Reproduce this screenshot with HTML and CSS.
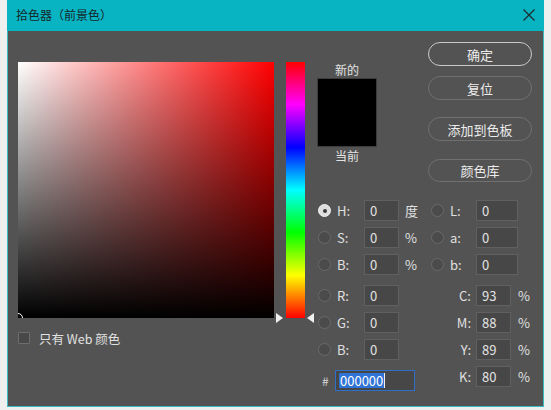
FILE: index.html
```html
<!DOCTYPE html>
<html lang="zh-CN">
<head>
<meta charset="utf-8">
<title>拾色器（前景色）</title>
<link rel="stylesheet" href="styles.css">
</head>
<body>
<div class="window">
  <div class="titlebar">
    <span class="title">拾色器（前景色）</span>
    <svg class="close" width="12" height="12" viewBox="0 0 12 12"><path d="M0.5 0.5L11.5 11.5M11.5 0.5L0.5 11.5" stroke="#1c2a2c" stroke-width="1.2" fill="none"/></svg>
  </div>
  <div class="content">
    <div class="picker">
      <div class="field"><span class="marker"></span></div>
      <div class="webonly"><span class="checkbox"></span><span>只有 Web 颜色</span></div>
    </div>
    <div class="hue-wrap">
      <div class="hue"></div>
      <span class="arrow arrow-l"></span>
      <span class="arrow arrow-r"></span>
    </div>
    <div class="panel">
      <div class="top">
        <div class="preview">
          <div class="plabel">新的</div>
          <div class="swatch"></div>
          <div class="plabel">当前</div>
        </div>
        <div class="buttons">
          <div class="btn btn-primary">确定</div>
          <div class="btn btn-reset">复位</div>
          <div class="btn btn-add">添加到色板</div>
          <div class="btn btn-lib">颜色库</div>
        </div>
      </div>
      <div class="fields">
        <div class="fcol fcol-left">
          <div class="row"><span class="radio checked"></span><span class="lbl">H:</span><span class="inp">0</span><span class="unit">度</span></div>
          <div class="row"><span class="radio"></span><span class="lbl">S:</span><span class="inp">0</span><span class="unit">%</span></div>
          <div class="row"><span class="radio"></span><span class="lbl">B:</span><span class="inp">0</span><span class="unit">%</span></div>
          <div class="row group"><span class="radio"></span><span class="lbl">R:</span><span class="inp">0</span></div>
          <div class="row"><span class="radio"></span><span class="lbl">G:</span><span class="inp">0</span></div>
          <div class="row"><span class="radio"></span><span class="lbl">B:</span><span class="inp">0</span></div>
          <div class="row group hashrow"><span class="hash">#</span><span class="inp hexinp"><span class="sel">000000</span><span class="caret"></span></span></div>
        </div>
        <div class="fcol fcol-right">
          <div class="row"><span class="radio"></span><span class="lbl">L:</span><span class="inp wide">0</span></div>
          <div class="row"><span class="radio"></span><span class="lbl">a:</span><span class="inp wide">0</span></div>
          <div class="row"><span class="radio"></span><span class="lbl">b:</span><span class="inp wide">0</span></div>
          <div class="row group"><span class="clbl">C:</span><span class="inp">93</span><span class="cunit">%</span></div>
          <div class="row"><span class="clbl">M:</span><span class="inp">88</span><span class="cunit">%</span></div>
          <div class="row"><span class="clbl">Y:</span><span class="inp">89</span><span class="cunit">%</span></div>
          <div class="row"><span class="clbl">K:</span><span class="inp">80</span><span class="cunit">%</span></div>
        </div>
      </div>
    </div>
  </div>
</div>
</body>
</html>
```
FILE: styles.css
```css
html, body {
  margin: 0;
  padding: 0;
}
body {
  background: #eeefef;
  width: 551px;
  height: 410px;
  overflow: hidden;
  font-family: "Noto Sans CJK SC", "Noto Sans", sans-serif;
  font-size: 13px;
  color: #e2e2e2;
}
.window {
  margin-left: 7px;
  width: 537px;
  height: 407px;
  box-sizing: border-box;
  border: 1px solid #3dbcc0;
  border-top: none;
  background: #535353;
  display: flex;
  flex-direction: column;
}
.titlebar {
  height: 31px;
  margin: 0 -1px;
  background: #08b3c2;
  display: flex;
  align-items: center;
  justify-content: space-between;
  padding: 0 9px 0 9px;
  flex: none;
}
.title {
  color: #17282a;
  font-size: 12px;
  line-height: 16px;
  margin-top: -1px;
}
.close {
  display: block;
  margin-top: -1px;
}
.content {
  display: flex;
  padding: 11px 0 0 10px;
}
.picker {
  width: 256px;
  margin-top: 20px;
}
.field {
  position: relative;
  width: 256px;
  height: 256px;
  overflow: hidden;
  background: linear-gradient(to bottom, rgba(0,0,0,0), #000), linear-gradient(to right, #fff, #f00);
}
.marker {
  position: absolute;
  left: -5px;
  bottom: -5px;
  width: 10px;
  height: 10px;
  border: 1px solid #fff;
  border-radius: 50%;
  box-sizing: border-box;
}
.webonly {
  display: flex;
  align-items: center;
  margin-top: 14px;
  height: 12px;
  font-size: 12.5px;
  color: #e0e0e0;
}
.checkbox {
  width: 12px;
  height: 12px;
  box-sizing: border-box;
  border: 1px solid #6d6d6d;
  background: #484848;
  border-radius: 1px;
  margin-right: 9px;
}
.hue-wrap {
  position: relative;
  margin-left: 12px;
  margin-top: 20px;
  width: 19px;
  height: 256px;
}
.hue {
  width: 19px;
  height: 256px;
  background: linear-gradient(to bottom, #f00 0%, #f0f 16.67%, #00f 33.33%, #0ff 50%, #0f0 66.67%, #ff0 83.33%, #f00 100%);
}
.arrow {
  position: absolute;
  bottom: -5px;
  width: 0;
  height: 0;
  border-top: 5px solid transparent;
  border-bottom: 5px solid transparent;
}
.arrow-l {
  left: -10px;
  border-left: 7px solid #f0f0f0;
}
.arrow-r {
  right: -9px;
  border-right: 7px solid #f0f0f0;
}
.panel {
  margin-left: 12px;
  width: 215px;
  display: flex;
  flex-direction: column;
}
.top {
  display: flex;
  justify-content: space-between;
}
.preview {
  width: 60px;
  margin-top: 20px;
  display: flex;
  flex-direction: column;
  align-items: center;
}
.plabel {
  font-size: 12px;
  line-height: 16px;
  color: #e2e2e2;
}
.swatch {
  width: 60px;
  height: 69px;
  box-sizing: border-box;
  background: #000;
  border: 1px solid #3c3c3c;
}
.preview .plabel:last-child {
  margin-top: 1px;
}
.buttons {
  width: 104px;
  display: flex;
  flex-direction: column;
}
.btn {
  height: 24px;
  box-sizing: border-box;
  border: 1px solid #707070;
  border-radius: 12px;
  display: flex;
  align-items: center;
  justify-content: center;
  font-size: 13px;
  color: #ececec;
}
.btn-primary {
  border: 1.5px solid #c9c9c9;
}
.btn-reset { margin-top: 10px; }
.btn-add { margin-top: 17px; }
.btn-lib { margin-top: 18px; height: 23px; }
.fields {
  display: flex;
  margin-top: 18px;
}
.fcol {
  display: flex;
  flex-direction: column;
  gap: 6px;
}
.fcol-left {
  width: 114px;
}
.row {
  display: flex;
  align-items: center;
  height: 21px;
}
.row.group {
  margin-top: 4px;
}
.fcol-right .row.group + .row {
  margin-top: 0;
}
.radio {
  width: 13px;
  height: 13px;
  box-sizing: border-box;
  border-radius: 50%;
  border: 1px solid #6a6a6a;
  background: #4b4b4b;
  margin-left: 1px;
  position: relative;
  flex: none;
}
.radio.checked {
  background: #dedede;
  border-color: #f0f0f0;
}
.radio.checked::after {
  content: "";
  position: absolute;
  left: 3.5px;
  top: 3.5px;
  width: 4px;
  height: 4px;
  border-radius: 50%;
  background: #3a3a3a;
}
.fcol-right .radio {
  margin-left: 0;
}
.lbl {
  margin-left: 6px;
  width: 27px;
  font-size: 13px;
  color: #e0e0e0;
}
.fcol-right .lbl {
  width: 26px;
}
.inp {
  width: 35px;
  height: 21px;
  box-sizing: border-box;
  background: #474747;
  border: 1px solid #606060;
  padding-left: 5px;
  display: flex;
  align-items: center;
  font-size: 13px;
  color: #e4e4e4;
  flex: none;
}
.inp.wide {
  width: 42px;
}
.unit {
  margin-left: 6px;
  font-size: 13px;
  color: #e0e0e0;
}
.hashrow {
  margin-top: 4px;
}
.hash {
  margin-left: 5px;
  width: 13px;
  font-size: 12px;
  color: #d8d8d8;
}
.hexinp {
  width: 80px;
  border-color: #2f6fc9;
  padding-left: 3px;
}
.sel {
  background: #2f74d6;
  color: #ffffff;
  line-height: 15px;
  padding: 0 1px;
}
.caret {
  width: 1px;
  height: 15px;
  background: #f0f0f0;
}
.clbl {
  width: 40px;
  text-align: right;
  padding-right: 5px;
  font-size: 13px;
  color: #e0e0e0;
}
.cunit {
  margin-left: 7px;
  font-size: 13px;
  color: #e0e0e0;
}
```
